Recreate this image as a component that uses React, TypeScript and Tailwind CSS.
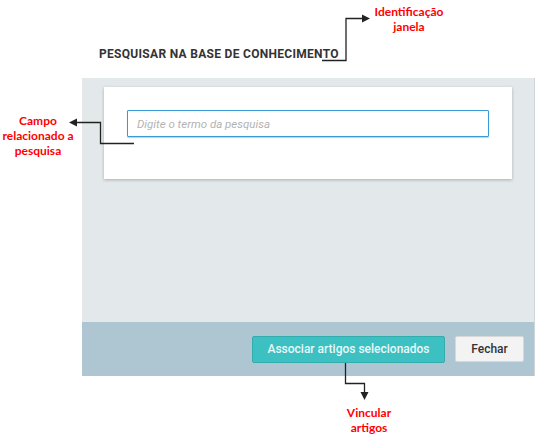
import React from 'react';

const note = "font-['Lato',sans-serif] font-bold text-[12px] leading-[15px] text-[#ff0000] text-center";

export default function App() {
  return (
    <div className="relative w-[545px] h-[441px] bg-white overflow-hidden font-['Roboto',sans-serif]">
      {/* Window title */}
      <div className="pt-[47px] pl-[99px] h-[78px]">
        <h1 className="text-[12px] leading-[15px] font-bold text-[#333] tracking-[0.3px]">
          PESQUISAR NA BASE DE CONHECIMENTO
        </h1>
      </div>

      {/* Dialog */}
      <div className="ml-[82px] w-[453px] border-r border-[#cfd6da]">
        <div className="h-[244px] bg-[#e3e8eb] pt-[9px] pl-[22px]">
          <div className="w-[408px] h-[92px] bg-white shadow-[0_1px_3px_rgba(0,0,0,0.25)] pt-[23px] pl-[23px]">
            <input
              className="w-[362px] h-[27px] border border-[#3a9ad6] rounded-[1px] px-[9px] text-[11.5px] italic text-[#333] placeholder:text-[#b3b3b3] outline-none shadow-[0_1px_1px_rgba(58,154,214,0.4)]"
              placeholder="Digite o termo da pesquisa"
            />
          </div>
        </div>
        <div className="h-[54px] bg-[#adc6d2] flex items-center justify-end gap-[10px] pr-[10px]">
          <button className="w-[193px] h-[27px] bg-[#3cc0c2] border border-[#33acae] rounded-[2px] text-[12px] font-medium text-[#eaf8f8]">
            Associar artigos selecionados
          </button>
          <button className="w-[69px] h-[26px] bg-[#f3f3f3] border border-[#d8d8d8] rounded-[2px] text-[12px] font-medium text-[#333]">
            Fechar
          </button>
        </div>
      </div>

      {/* Annotations */}
      <div className={`absolute left-[369px] top-[4px] w-[80px] ${note}`}>
        Identificação<br />janela
      </div>
      <div className={`absolute left-0 top-[113px] w-[76px] ${note}`}>
        Campo<br />relacionado a<br />pesquisa
      </div>
      <div className={`absolute left-[334px] top-[405px] w-[70px] ${note}`}>
        Vincular<br />artigos
      </div>

      <svg className="absolute inset-0 pointer-events-none" width="545" height="441">
        <g fill="none" stroke="#222" strokeWidth="1.3">
          <polyline points="322,60.5 346,60.5 346,18.5 363,18.5" />
          <polyline points="134,143.5 100.5,143.5 100.5,122.5 76,122.5" />
          <polyline points="345.5,363 345.5,383.5 364.5,383.5 364.5,393" />
        </g>
        <g fill="#222">
          <polygon points="370,18.5 362,14.5 362,22.5" />
          <polygon points="69,122.5 77,118.5 77,126.5" />
          <polygon points="364.5,400 360.5,392 368.5,392" />
        </g>
      </svg>
    </div>
  );
}
